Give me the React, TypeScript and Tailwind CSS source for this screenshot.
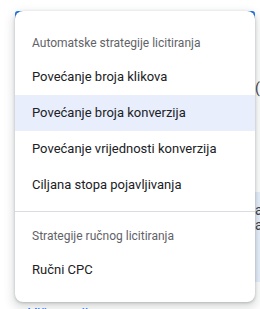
import React from "react";

const items = [
  "Povećanje broja klikova",
  "Povećanje broja konverzija",
  "Povećanje vrijednosti konverzija",
  "Ciljana stopa pojavljivanja",
];

export default function App() {
  return (
    <div className="relative w-[260px] h-[309px] overflow-hidden bg-white font-['Roboto',sans-serif]">
      {/* background page content */}
      <div className="flex flex-col">
        <div className="ml-[15px] mt-[11px] w-[240px] h-[44px] rounded-[3px] border-2 border-[#1a73e8]" />
        <div className="mt-[23px] pl-[255px] text-[14px] leading-[20px] text-[#3c4043] whitespace-nowrap">(T</div>
        <div className="mt-[94px] ml-[24px] w-[300px] h-[90px] bg-[#e8f0fe] pl-[231px] pt-[11px] text-[14px] leading-[15px] text-[#3c4043] whitespace-nowrap">
          <div>a</div>
          <div>a</div>
        </div>
        <div className="mt-[22px] pl-[28px] text-[14px] leading-[20px] text-[#1a73e8] whitespace-nowrap">Više opcija</div>
      </div>

      {/* dropdown menu overlay */}
      <div className="absolute left-[15px] top-[11px] w-[240px] rounded-[8px] bg-white py-[8px] shadow-[0_1px_3px_0_rgba(60,64,67,0.3),0_4px_8px_3px_rgba(60,64,67,0.15)]">
        <div className="px-[17px] pt-[14px] pb-[6px] text-[12px] leading-[20px] text-[#5f6368]">
          Automatske strategije licitiranja
        </div>
        {items.map((t, i) => (
          <div
            key={t}
            className={
              i === 1
                ? "h-[36px] flex items-center px-[17px] text-[13px] text-[#202124] bg-[#e8eefc]"
                : "h-[36px] flex items-center px-[17px] text-[13px] text-[#202124]"
            }
          >
            {t}
          </div>
        ))}
        <div className="my-[8px] h-px bg-[#dadce0]" />
        <div className="px-[17px] pt-[6px] pb-[6px] text-[12px] leading-[20px] text-[#5f6368]">
          Strategije ručnog licitiranja
        </div>
        <div className="h-[36px] flex items-center px-[17px] text-[13px] text-[#202124]">Ručni CPC</div>
        <div className="h-[6px]" />
      </div>
    </div>
  );
}
